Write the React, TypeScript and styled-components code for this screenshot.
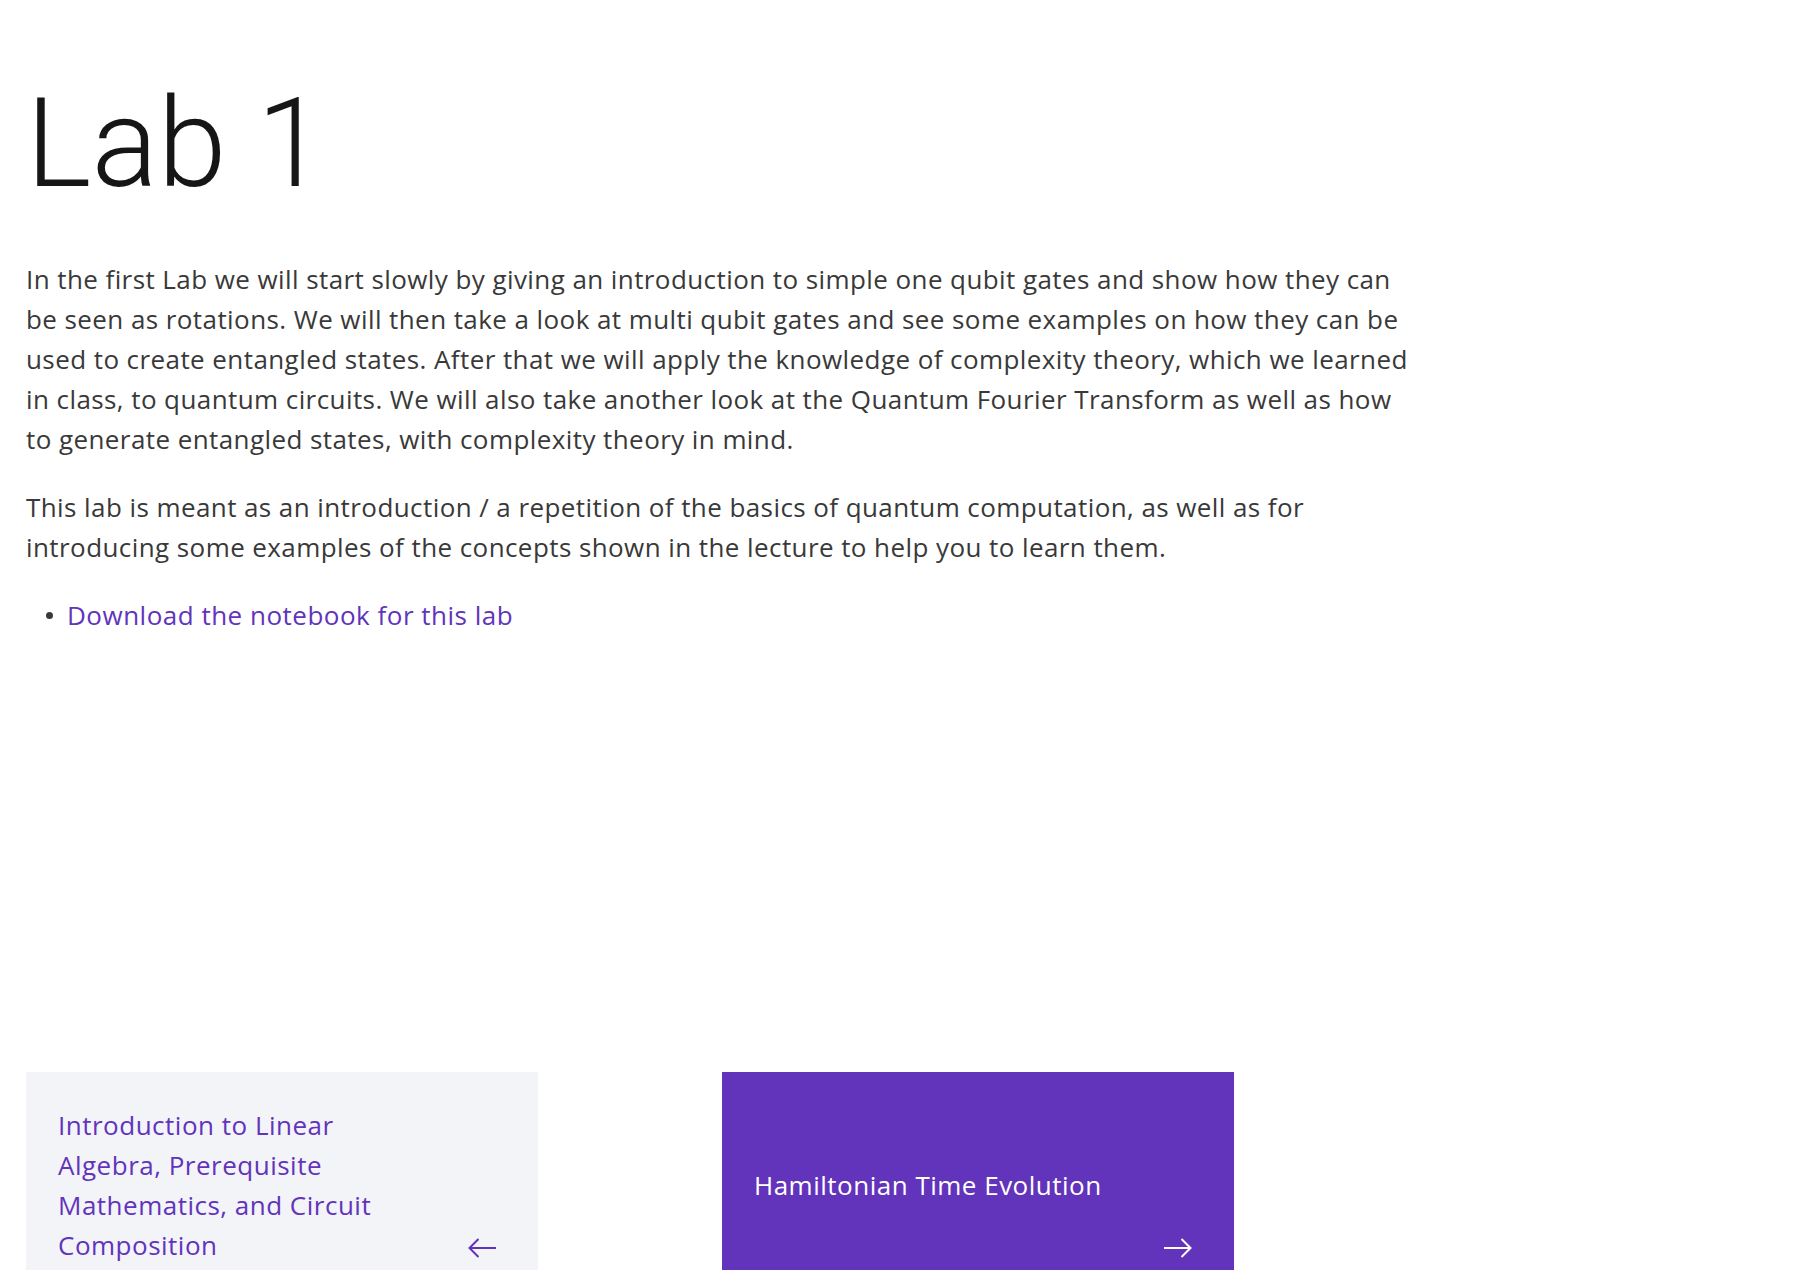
import React from "react";
import styled, { createGlobalStyle } from "styled-components";

const Global = createGlobalStyle`
  html, body { margin: 0; padding: 0; background: #ffffff; }
  body { font-family: "Open Sans", Roboto, "Liberation Sans", sans-serif; }
`;

const Page = styled.main`
  padding: 82px 0 0 26px;
  box-sizing: border-box;
  min-height: 1270px;
`;

const Title = styled.h1`
  margin: 0 0 53px 0;
  font-family: Roboto, "Liberation Sans", sans-serif;
  font-size: 124px;
  line-height: 124px;
  font-weight: 300;
  color: #161616;
  letter-spacing: 0;
`;

const Body = styled.div`
  max-width: 1396px;
`;

const Para = styled.p`
  margin: 0 0 28px 0;
  font-size: 26px;
  line-height: 40px;
  letter-spacing: 0.42px;
  color: #393939;
`;

const List = styled.ul`
  margin: 0;
  padding: 0;
  list-style: none;
`;

const Item = styled.li`
  display: flex;
  align-items: center;
  font-size: 26px;
  line-height: 40px;
  letter-spacing: 0.5px;
  color: #393939;
  &::before {
    content: "";
    width: 7px;
    height: 7px;
    border-radius: 50%;
    background: #393939;
    margin: 0 14px 0 20px;
    flex: none;
  }
`;

const Link = styled.a`
  color: #6233bb;
  text-decoration: none;
`;

const Pager = styled.nav`
  display: flex;
  gap: 184px;
  margin-top: 437px;
`;

const Card = styled.a<{ $primary?: boolean }>`
  display: grid;
  width: 512px;
  height: 226px;
  box-sizing: border-box;
  padding: 0 42px 0 32px;
  background: ${(p) => (p.$primary ? "#6233bb" : "#f2f4f8")};
  color: ${(p) => (p.$primary ? "#ffffff" : "#6233bb")};
  text-decoration: none;
`;

const CardTitle = styled.span`
  grid-area: 1 / 1;
  align-self: center;
  max-width: 370px;
  font-size: 26px;
  line-height: 40px;
  letter-spacing: 0.5px;
`;

const CardIcon = styled.svg`
  grid-area: 1 / 1;
  align-self: end;
  justify-self: end;
  margin-bottom: 40px;
  width: 28px;
  height: 20px;
`;

const ArrowLeft = () => (
  <CardIcon viewBox="0 0 28 20" fill="none" stroke="currentColor" strokeWidth="2">
    <path d="M28 10H1.5M10.5 1L1.5 10L10.5 19" />
  </CardIcon>
);

const ArrowRight = () => (
  <CardIcon viewBox="0 0 28 20" fill="none" stroke="currentColor" strokeWidth="2">
    <path d="M0 10H26.5M17.5 1L26.5 10L17.5 19" />
  </CardIcon>
);

export default function App() {
  return (
    <>
      <Global />
      <Page>
        <Title>Lab 1</Title>
        <Body>
          <Para>
            In the first Lab we will start slowly by giving an introduction to simple one qubit gates and show how
            they can be seen as rotations. We will then take a look at multi qubit gates and see some examples on how
            they can be used to create entangled states. After that we will apply the knowledge of complexity theory,
            which we learned in class, to quantum circuits. We will also take another look at the Quantum Fourier
            Transform as well as how to generate entangled states, with complexity theory in mind.
          </Para>
          <Para>
            This lab is meant as an introduction / a repetition of the basics of quantum computation, as well as for
            introducing some examples of the concepts shown in the lecture to help you to learn them.
          </Para>
          <List>
            <Item>
              <Link href="#">Download the notebook for this lab</Link>
            </Item>
          </List>
        </Body>
        <Pager>
          <Card href="#">
            <CardTitle>Introduction to Linear Algebra, Prerequisite Mathematics, and Circuit Composition</CardTitle>
            <ArrowLeft />
          </Card>
          <Card href="#" $primary>
            <CardTitle>Hamiltonian Time Evolution</CardTitle>
            <ArrowRight />
          </Card>
        </Pager>
      </Page>
    </>
  );
}
